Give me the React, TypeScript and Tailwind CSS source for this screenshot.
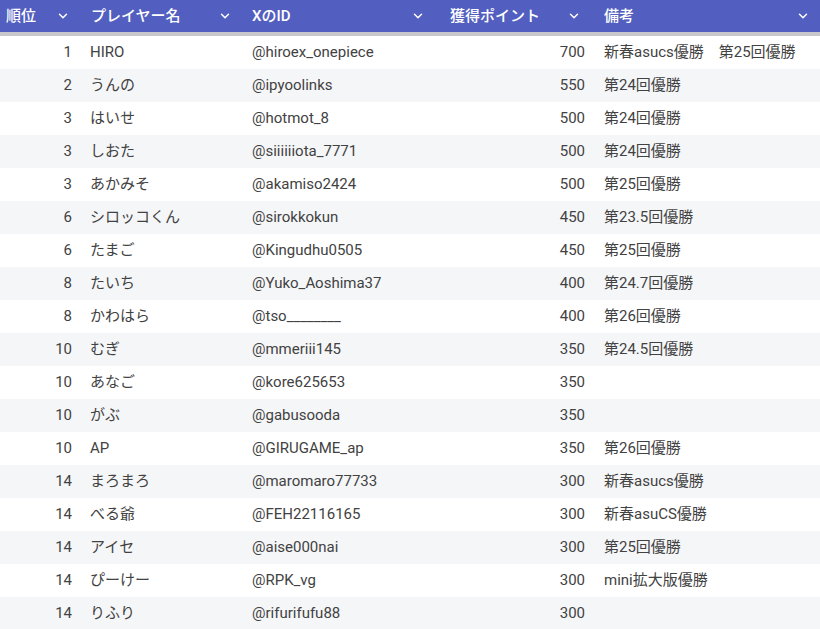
import React from "react";

const rows: [string, string, string, string, string][] = [
  ["1","HIRO","@hiroex_onepiece","700","新春asucs優勝　第25回優勝"],
  ["2","うんの","@ipyoolinks","550","第24回優勝"],
  ["3","はいせ","@hotmot_8","500","第24回優勝"],
  ["3","しおた","@siiiiiiota_7771","500","第24回優勝"],
  ["3","あかみそ","@akamiso2424","500","第25回優勝"],
  ["6","シロッコくん","@sirokkokun","450","第23.5回優勝"],
  ["6","たまご","@Kingudhu0505","450","第25回優勝"],
  ["8","たいち","@Yuko_Aoshima37","400","第24.7回優勝"],
  ["8","かわはら","@tso________","400","第26回優勝"],
  ["10","むぎ","@mmeriii145","350","第24.5回優勝"],
  ["10","あなご","@kore625653","350",""],
  ["10","がぶ","@gabusooda","350",""],
  ["10","AP","@GIRUGAME_ap","350","第26回優勝"],
  ["14","まろまろ","@maromaro77733","300","新春asucs優勝"],
  ["14","べる爺","@FEH22116165","300","新春asuCS優勝"],
  ["14","アイセ","@aise000nai","300","第25回優勝"],
  ["14","ぴーけー","@RPK_vg","300","mini拡大版優勝"],
  ["14","りふり","@rifurifufu88","300",""],
];

const Chev = () => (
  <svg width="14" height="14" viewBox="0 0 24 24" fill="none" stroke="white" strokeWidth="2.5" strokeLinecap="round" strokeLinejoin="round"><path d="M6 9l6 6 6-6"/></svg>
);

const font = { fontFamily: "Roboto, 'Noto Sans CJK JP', sans-serif" };

export default function App() {
  return (
    <div className="w-[820px] h-[629px] overflow-hidden bg-white text-[15px] text-[#424242]" style={font}>
      <div className="flex h-[32px] bg-[#535fc0] text-white font-medium items-center">
        <div className="w-[82px] flex items-center justify-between pl-[6px] pr-[12px]">順位<Chev/></div>
        <div className="w-[162px] flex items-center justify-between pl-[9px] pr-[12px]">プレイヤー名<Chev/></div>
        <div className="w-[196px] flex items-center justify-between pl-[8px] pr-[15px]">XのID<Chev/></div>
        <div className="w-[156px] flex items-center justify-between pl-[10px] pr-[15px]">獲得ポイント<Chev/></div>
        <div className="flex-1 flex items-center justify-between pl-[8px] pr-[10px]">備考<Chev/></div>
      </div>
      <div className="h-[4px] bg-[#c8c8cc]" />
      {rows.map((r, i) => (
        <div key={i} className={`flex h-[33px] items-center ${i % 2 ? "bg-[#f5f6f8]" : "bg-white"}`}>
          <div className="w-[82px] text-right pr-[10px]">{r[0]}</div>
          <div className="w-[162px] pl-[8px]">{r[1]}</div>
          <div className="w-[196px] pl-[8px]">{r[2]}</div>
          <div className="w-[156px] text-right pr-[11px]">{r[3]}</div>
          <div className="flex-1 pl-[8px] whitespace-pre">{r[4]}</div>
        </div>
      ))}
    </div>
  );
}
